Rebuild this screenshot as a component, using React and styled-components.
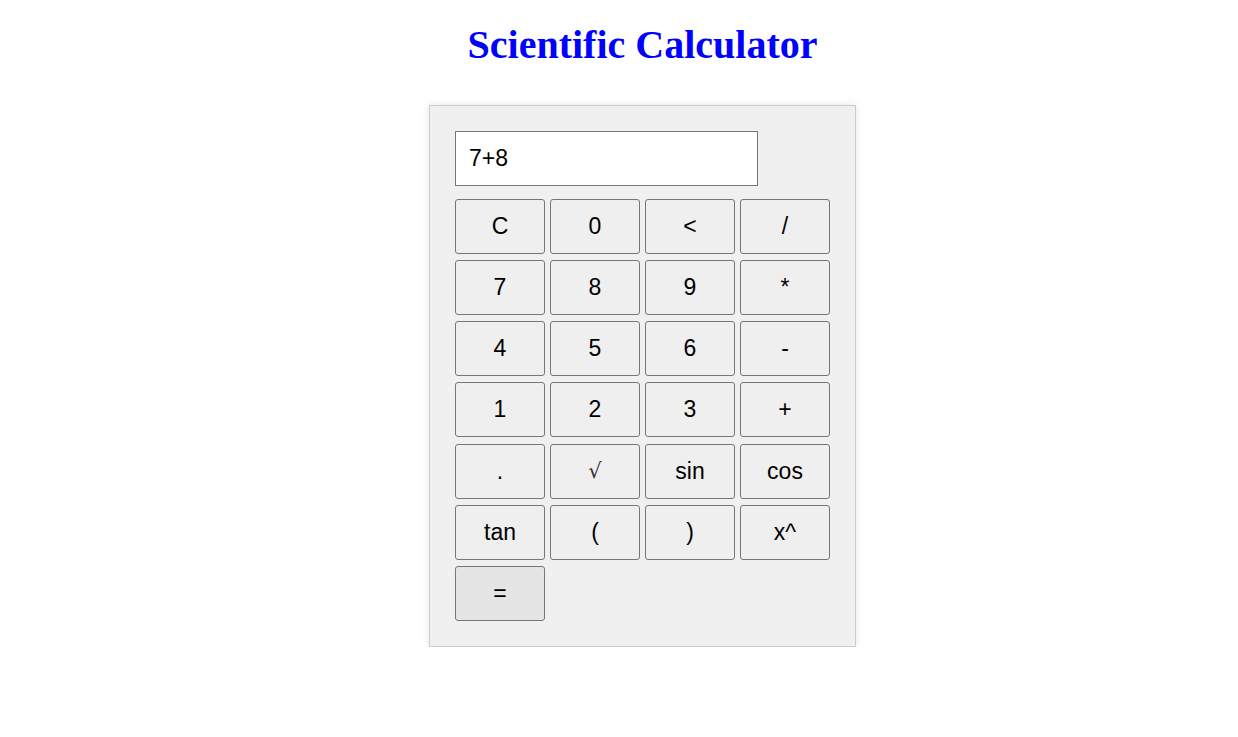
import React, { useState } from 'react';
import styled, { createGlobalStyle } from 'styled-components';

const GlobalStyle = createGlobalStyle`
body {
  margin: 0;
  background: #fff;
  font-family: "Liberation Sans", Arial, sans-serif;
}
`

const keys = [
  'C', '0', '<', '/',
  '7', '8', '9', '*',
  '4', '5', '6', '-',
  '1', '2', '3', '+',
  '.', '√', 'sin', 'cos',
  'tan', '(', ')', 'x^',
  '=',
];

const App = () => {
  const [value, setValue] = useState('7+8');

  const press = (k) => {
    if (k === 'C') setValue('');
    else if (k === '<') setValue(value.slice(0, -1));
    else if (k === '=') {
      try {
        setValue(String(Function('return (' + value + ')')()));
      } catch (e) {
        setValue('Error');
      }
    } else setValue(value + k);
  };

  return (
    <Page>
      <GlobalStyle />
      <Title>Scientific Calculator</Title>
      <Calculator>
        <Display value={value} onChange={(e) => setValue(e.target.value)} />
        <Keys>
          {keys.map((k) => (
            <Key key={k} $active={k === '='} $serif={k === '√'} onClick={() => press(k)}>
              {k}
            </Key>
          ))}
        </Keys>
      </Calculator>
    </Page>
  );
};

export default App;

const Page = styled.div`
display: flex;
flex-direction: column;
align-items: center;
padding-left: 47px;
padding-top: 1px;
`

const Title = styled.h1`
font-family: "Liberation Serif", "Times New Roman", serif;
font-weight: bold;
font-size: 40px;
color: #0000ff;
margin: 20px 0 37px;
`

const Calculator = styled.div`
width: 375px;
padding: 25px;
background: #f0f0f0;
border: 1px solid #cccccc;
box-shadow: 0 0 8px rgba(0, 0, 0, 0.1);
display: flex;
flex-direction: column;
gap: 13px;
`

const Display = styled.input`
width: 303px;
height: 55px;
box-sizing: border-box;
border: 1px solid #767676;
background: #fff;
padding: 0 13px;
font-size: 23px;
font-family: "Liberation Sans", Arial, sans-serif;
color: #000;
outline: none;
`

const Keys = styled.div`
display: grid;
grid-template-columns: repeat(4, 90px);
grid-auto-rows: 55px;
column-gap: 5px;
row-gap: 6.17px;
`

const Key = styled.button`
box-sizing: border-box;
border: 1px solid #767676;
border-radius: 3px;
background: ${(p) => (p.$active ? '#e5e5e5' : '#efefef')};
color: ${(p) => (p.$serif ? '#333' : '#000')};
font-size: ${(p) => (p.$serif ? '21px' : '23px')};
font-family: ${(p) => (p.$serif ? '"DejaVu Serif", serif' : '"Liberation Sans", Arial, sans-serif')};
font-weight: normal;
cursor: pointer;
padding: 0;

&:hover {
  background: #e5e5e5;
}
`
